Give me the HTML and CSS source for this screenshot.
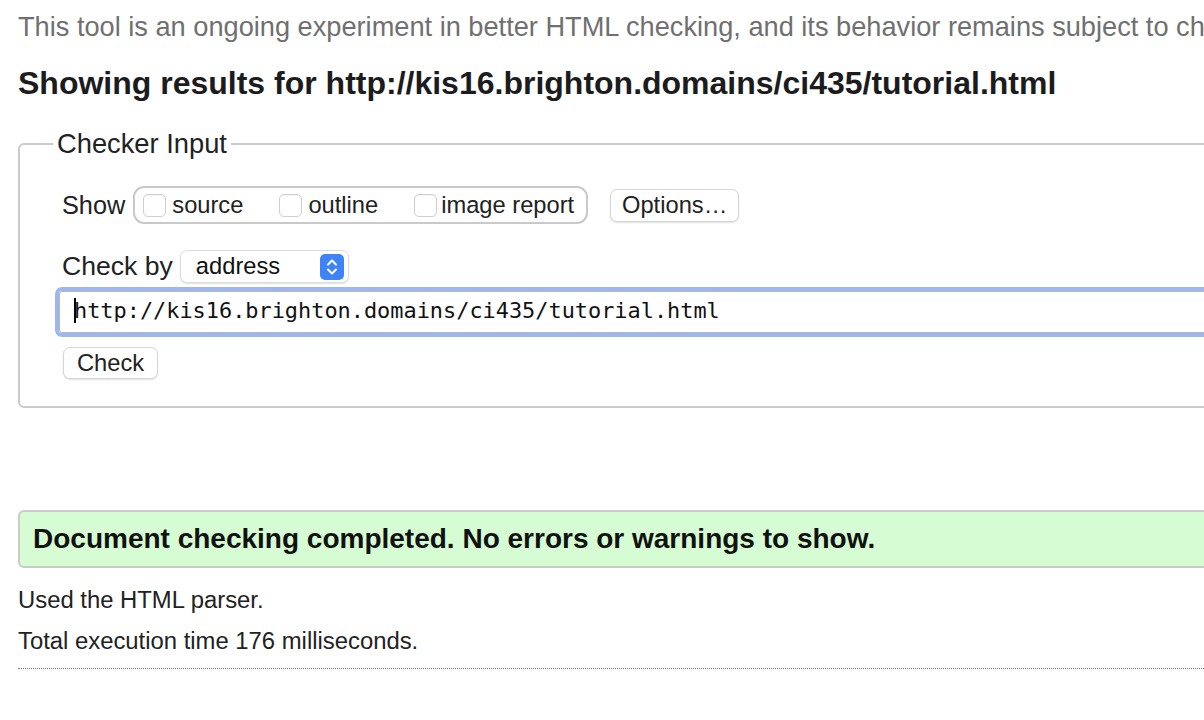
FILE: index.html
```html
<!DOCTYPE html>
<html lang="en">
<head>
<meta charset="utf-8">
<title>Showing results for http://kis16.brighton.domains/ci435/tutorial.html</title>
<link rel="stylesheet" href="styles.css">
</head>
<body>
<div class="page">
  <p class="lead">This tool is an ongoing experiment in better HTML checking, and its behavior remains subject to change.</p>
  <h2 class="title">Showing results for http://kis16.brighton.domains/ci435/tutorial.html</h2>

  <fieldset class="checker">
    <legend class="legend">Checker Input</legend>
    <div class="row">
      <span class="label label-show">Show</span>
      <div class="toggles">
        <label class="toggle"><span class="cb"></span>source</label>
        <label class="toggle"><span class="cb"></span>outline</label>
        <label class="toggle"><span class="cb"></span>image report</label>
      </div>
      <button class="btn options" type="button">Options…</button>
    </div>
    <div class="row row-by">
      <span class="label">Check by</span>
      <div class="select">
        <span class="select-text">address</span>
        <span class="stepper">
          <svg width="24" height="26" viewBox="0 0 24 26">
            <rect x="0" y="0" width="24" height="26" rx="5" fill="#3f84f7"/>
            <path d="M8 10.5 L12 6.5 L16 10.5" fill="none" stroke="#fff" stroke-width="2" stroke-linecap="round" stroke-linejoin="round"/>
            <path d="M8 15.5 L12 19.5 L16 15.5" fill="none" stroke="#fff" stroke-width="2" stroke-linecap="round" stroke-linejoin="round"/>
          </svg>
        </span>
      </div>
    </div>
    <div class="url"><span class="caret"></span>http://kis16.brighton.domains/ci435/tutorial.html</div>
    <button class="btn check" type="button">Check</button>
  </fieldset>

  <div class="success">Document checking completed. No errors or warnings to show.</div>
  <p class="note">Used the HTML parser.</p>
  <p class="note">Total execution time 176 milliseconds.</p>
  <div class="dotted"></div>
</div>
</body>
</html>
```

FILE: styles.css
```css
html, body {
  margin: 0;
  padding: 0;
  background: #ffffff;
  overflow: hidden;
}

body {
  font-family: "Liberation Sans", Arial, Helvetica, sans-serif;
  color: #222222;
}

.page {
  width: 1500px;
  padding-left: 18px;
}

.lead {
  margin: 0;
  height: 54px;
  line-height: 54px;
  font-size: 27.2px;
  color: #707070;
  white-space: nowrap;
}

.title {
  margin: 0;
  line-height: 58px;
  font-size: 32px;
  font-weight: bold;
  color: #1c1c1e;
  white-space: nowrap;
}

.checker {
  margin: 16px 0 0 0;
  border: 2px solid #cbcbcb;
  border-radius: 6px;
  padding: 26px 0 27px 42px;
  min-inline-size: 0;
}

.legend {
  margin-left: -9px;
  padding: 0 4px;
  font-size: 27.3px;
  line-height: 32px;
  color: #222222;
}

.row {
  display: flex;
  align-items: center;
  height: 38px;
}

.row-by {
  margin-top: 26px;
  height: 33px;
}

.label {
  font-size: 26.6px;
  color: #222222;
}

.label-show {
  font-size: 25.3px;
}

.toggles {
  display: flex;
  align-items: center;
  box-sizing: border-box;
  height: 38px;
  margin-left: 8px;
  padding: 0 12px 0 8px;
  border: 2px solid #c9c9c9;
  border-radius: 11px;
  gap: 36px;
}

.toggle {
  display: flex;
  align-items: center;
  gap: 6px;
  font-size: 23.7px;
  color: #222222;
}

.toggle:last-child {
  gap: 4px;
}

.cb {
  display: block;
  box-sizing: border-box;
  width: 23px;
  height: 23px;
  border: 1px solid #cfcfcf;
  border-radius: 5px;
  background: #ffffff;
  box-shadow: inset 0 1px 1px rgba(0,0,0,0.04);
}

.btn {
  box-sizing: border-box;
  background: #ffffff;
  border: 1px solid #d6d6d6;
  border-radius: 7px;
  box-shadow: 0 1px 1.5px rgba(0,0,0,0.12);
  font-family: "Liberation Sans", Arial, Helvetica, sans-serif;
  font-size: 23.7px;
  color: #222222;
  padding: 0;
}

.options {
  margin-left: 22px;
  width: 129px;
  height: 33px;
}

.select {
  display: flex;
  align-items: center;
  justify-content: space-between;
  box-sizing: border-box;
  margin-left: 7px;
  width: 169px;
  height: 33px;
  padding: 0 4px 0 15px;
  border: 1px solid #dcdcdc;
  border-radius: 7px;
  box-shadow: 0 1px 1.5px rgba(0,0,0,0.12);
  background: #ffffff;
  font-size: 23.7px;
  color: #111111;
}

.stepper {
  display: flex;
}

.url {
  display: flex;
  align-items: center;
  box-sizing: border-box;
  margin-top: 8px;
  margin-left: -3px;
  height: 42px;
  padding-left: 14px;
  padding-bottom: 3px;
  border: 1px solid #b8b8b8;
  border-radius: 3px;
  outline: 4px solid #9ab6f3;
  outline-offset: 0;
  font-family: "DejaVu Sans Mono", "Liberation Mono", monospace;
  font-size: 21.9px;
  color: #111111;
  white-space: nowrap;
}

.caret {
  display: block;
  width: 2px;
  height: 25px;
  margin-right: -2px;
  background: #000000;
}

.check {
  display: block;
  margin-top: 14px;
  margin-left: 1px;
  width: 95px;
  height: 32px;
}

.success {
  box-sizing: border-box;
  margin-top: 102px;
  height: 58px;
  line-height: 54px;
  padding-left: 13px;
  border: 2px solid #cbcbcb;
  border-radius: 6px;
  background: #d6fcd3;
  font-size: 28px;
  font-weight: bold;
  color: #111111;
  white-space: nowrap;
}

.note {
  margin: 0;
  line-height: 41px;
  font-size: 23.85px;
  color: #222222;
}

.success + .note {
  margin-top: 11px;
}

.dotted {
  margin-top: 7px;
  border-top: 1px dotted #777777;
}
```
